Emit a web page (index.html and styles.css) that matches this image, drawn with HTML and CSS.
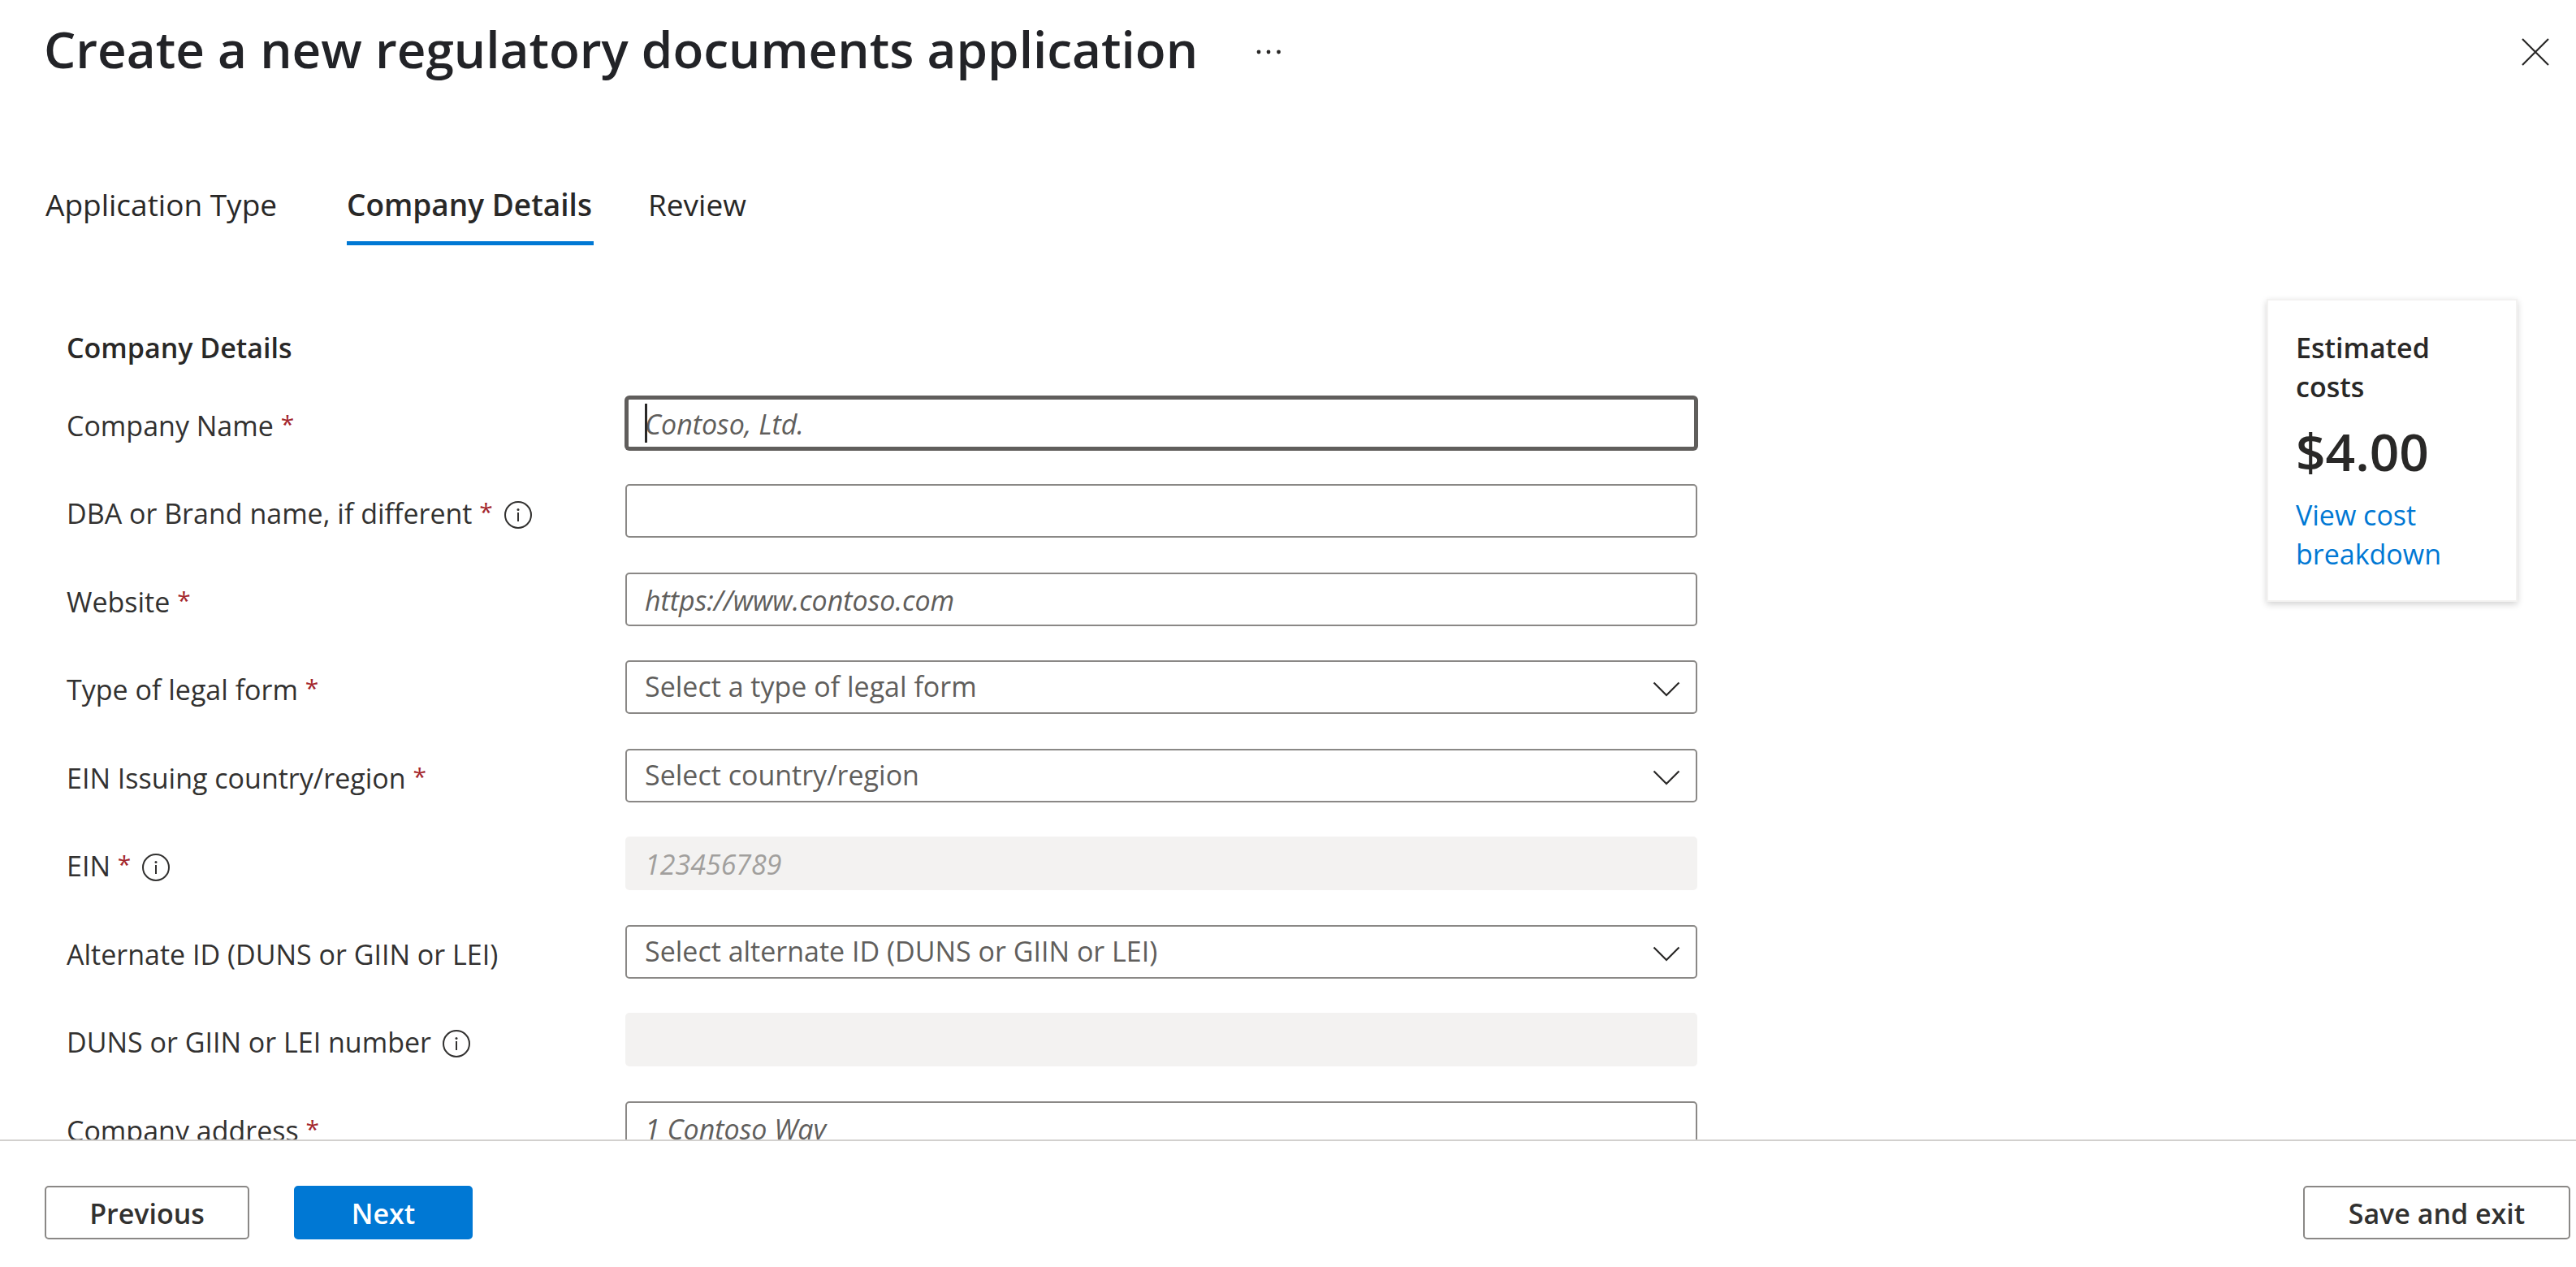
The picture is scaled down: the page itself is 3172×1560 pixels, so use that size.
FILE: index.html
```html
<!DOCTYPE html>
<html lang="en">
<head>
<meta charset="utf-8">
<meta name="viewport" content="width=device-width, initial-scale=1">
<title>Create a new regulatory documents application</title>
<link rel="stylesheet" href="styles.css">
</head>
<body>
<svg class="sprite" aria-hidden="true">
  <symbol id="icon-info" viewBox="0 0 34 34">
    <circle cx="17" cy="17" r="16" fill="none" stroke="currentColor" stroke-width="2"/>
    <circle cx="17" cy="10.5" r="1.5" fill="currentColor"/>
    <path d="M17 14v11" stroke="currentColor" stroke-width="2"/>
  </symbol>
  <symbol id="icon-chevron" viewBox="0 0 34 20">
    <path d="M1.5 1.5 17 17 32.500 1.500" fill="none" stroke="currentColor" stroke-width="2.200"/>
  </symbol>
</svg>
<div class="blade">
  <header class="blade-header">
    <h1 class="blade-title">Create a new regulatory documents application</h1>
    <button class="icon-button" type="button" aria-label="More actions">
      <svg width="30" height="6" viewBox="0 0 30 6" fill="currentColor"><circle cx="3" cy="3" r="2.400"/><circle cx="15" cy="3" r="2.400"/><circle cx="27.500" cy="3" r="2.400"/></svg>
    </button>
    <button class="icon-button close-button" type="button" aria-label="Close">
      <svg width="34" height="34" viewBox="0 0 34 34"><path d="M1 1l32 32M33 1L1 33" stroke="currentColor" stroke-width="2.200"/></svg>
    </button>
  </header>

  <nav class="tabs" role="tablist">
    <button class="tab" type="button" role="tab" aria-selected="false">Application Type</button>
    <button class="tab tab-active" type="button" role="tab" aria-selected="true">Company Details</button>
    <button class="tab" type="button" role="tab" aria-selected="false">Review</button>
  </nav>

  <main class="content">
    <form class="company-form">
      <h2 class="section-title">Company Details</h2>
      <div class="fields">
        <div class="row">
          <div class="label"><label for="company-name">Company Name <span class="required">*</span></label></div>
          <div class="control">
            <input class="field field-focused" id="company-name" type="text" placeholder="Contoso, Ltd.">
            <span class="caret"></span>
          </div>
        </div>
        <div class="row">
          <div class="label"><label for="dba">DBA or Brand name, if different <span class="required">*</span></label><svg class="info"><use href="#icon-info"/></svg></div>
          <div class="control"><input class="field" id="dba" type="text"></div>
        </div>
        <div class="row">
          <div class="label"><label for="website">Website <span class="required">*</span></label></div>
          <div class="control"><input class="field" id="website" type="text" placeholder="https://www.contoso.com"></div>
        </div>
        <div class="row">
          <div class="label"><label for="legal-form">Type of legal form <span class="required">*</span></label></div>
          <div class="control">
            <select class="field field-select" id="legal-form"><option>Select a type of legal form</option></select>
            <svg class="chevron"><use href="#icon-chevron"/></svg>
          </div>
        </div>
        <div class="row">
          <div class="label"><label for="ein-country">EIN Issuing country/region <span class="required">*</span></label></div>
          <div class="control">
            <select class="field field-select" id="ein-country"><option>Select country/region</option></select>
            <svg class="chevron"><use href="#icon-chevron"/></svg>
          </div>
        </div>
        <div class="row">
          <div class="label"><label for="ein">EIN <span class="required">*</span></label><svg class="info"><use href="#icon-info"/></svg></div>
          <div class="control"><input class="field" id="ein" type="text" placeholder="123456789" disabled></div>
        </div>
        <div class="row">
          <div class="label"><label for="alternate-id">Alternate ID (DUNS or GIIN or LEI)</label></div>
          <div class="control">
            <select class="field field-select" id="alternate-id"><option>Select alternate ID (DUNS or GIIN or LEI)</option></select>
            <svg class="chevron"><use href="#icon-chevron"/></svg>
          </div>
        </div>
        <div class="row">
          <div class="label"><label for="alternate-number">DUNS or GIIN or LEI number</label><svg class="info"><use href="#icon-info"/></svg></div>
          <div class="control"><input class="field" id="alternate-number" type="text" disabled></div>
        </div>
        <div class="row">
          <div class="label"><label for="address">Company address <span class="required">*</span></label></div>
          <div class="control"><input class="field" id="address" type="text" placeholder="1 Contoso Way"></div>
        </div>
      </div>
    </form>

    <aside class="cost-card">
      <h2 class="cost-title">Estimated costs</h2>
      <p class="cost-amount">$4.00</p>
      <a class="cost-link" href="#">View cost breakdown</a>
    </aside>
  </main>

  <footer class="footer">
    <button class="button button-previous" type="button">Previous</button>
    <button class="button button-primary" type="button">Next</button>
    <button class="button button-save" type="button">Save and exit</button>
  </footer>
</div>
</body>
</html>
```
FILE: styles.css
```css
* {
  box-sizing: border-box;
}

body {
  margin: 0;
  background: #fff;
  color: #292827;
  font-family: "Open Sans", "Noto Sans", sans-serif;
  font-size: 34px;
  line-height: 48px;
}

h1,
h2,
p {
  margin: 0;
}

button,
input,
select {
  font: inherit;
  color: inherit;
}

.sprite {
  display: none;
}

.blade {
  display: flex;
  flex-direction: column;
  height: 100vh;
}

/* Header */
.blade-header {
  display: flex;
  align-items: center;
  padding: 16px 33px 0 54px;
}

.blade-title {
  margin-right: 72px;
  color: #222327;
  font-size: 62px;
  font-weight: 600;
  line-height: 88px;
}

.icon-button {
  display: flex;
  padding: 8px 0 0;
  border: 0;
  background: none;
}

.close-button {
  margin-left: auto;
}

/* Tabs */
.tabs {
  display: flex;
  gap: 67px;
  padding: 122px 56px 0;
}

.tab {
  padding: 0 0 19px;
  border: 0;
  border-bottom: 5px solid transparent;
  background: none;
  font-size: 37px;
  line-height: 52px;
  text-align: left;
}

.tab:not(:last-child) {
  min-width: 304px;
}

.tab-active {
  border-bottom-color: #0078d4;
  font-weight: 600;
}

/* Form */
.content {
  display: flex;
  flex: 1;
  justify-content: space-between;
  align-items: flex-start;
  gap: 48px;
  min-height: 0;
  padding: 66px 72px 0 82px;
  overflow: hidden;
}

.company-form {
  flex: 0 1 2008px;
  padding-top: 36px;
}

.section-title {
  margin-bottom: 36px;
  font-size: 34px;
  font-weight: 600;
}

.fields {
  display: grid;
  grid-auto-rows: 108px 109px;
}

.row {
  display: grid;
  grid-template-columns: 688px minmax(0, 1fr);
  align-items: start;
}

.label {
  display: flex;
  align-items: center;
  gap: 14px;
  padding-top: 12px;
  color: #323130;
}

.required {
  color: #a4262c;
  font-size: 30px;
  line-height: 1;
  vertical-align: 4px;
}

.info {
  width: 34px;
  height: 34px;
  margin-top: 3px;
}

.control {
  position: relative;
  display: flex;
}

.field {
  width: 100%;
  height: 66px;
  padding: 2px 22px 0;
  border: 2px solid #8a8886;
  border-radius: 5px;
  outline: 0;
  background: #fff;
}

.field::placeholder {
  color: #605e5c;
  font-style: italic;
  opacity: 1;
}

.field-focused {
  padding: 2px 20px 0;
  border: 4px solid #605e5c;
  box-shadow: 0 0 0 1px #605e5c;
}

.field:disabled {
  border-color: #f3f2f1;
  background: #f3f2f1;
}

.field:disabled::placeholder {
  color: #a19f9d;
}

.field-select {
  padding: 0 22px 2px;
  color: #605e5c;
  appearance: none;
}

.caret {
  position: absolute;
  top: 9px;
  left: 24px;
  width: 3px;
  height: 48px;
  background: #292827;
}

.chevron {
  position: absolute;
  top: 26px;
  right: 21px;
  width: 34px;
  height: 20px;
  pointer-events: none;
}

/* Cost card */
.cost-card {
  flex: 0 0 309px;
  padding: 34px 34px 33px;
  border: 2px solid #f3f2f1;
  box-shadow: 0 3px 8px rgba(0, 0, 0, 0.18);
}

.cost-title {
  font-size: 34px;
  font-weight: 600;
}

.cost-amount {
  margin: 12px 0 10px;
  font-size: 64px;
  font-weight: 600;
  line-height: 88px;
}

.cost-link {
  display: block;
  color: #0078d4;
  text-decoration: none;
}

/* Footer */
.footer {
  display: flex;
  gap: 55px;
  padding: 55px 7px 34px 55px;
  border-top: 2px solid #d2d0ce;
}

.button {
  height: 66px;
  padding: 2px 0 0;
  border: 2px solid #8a8886;
  border-radius: 5px;
  background: #fff;
  color: #323130;
  font-weight: 600;
  line-height: 48px;
}

.button-previous {
  width: 252px;
}

.button-primary {
  width: 220px;
  border-color: #0078d4;
  background: #0078d4;
  color: #fff;
}

.button-save {
  width: 329px;
  margin-left: auto;
}
```
